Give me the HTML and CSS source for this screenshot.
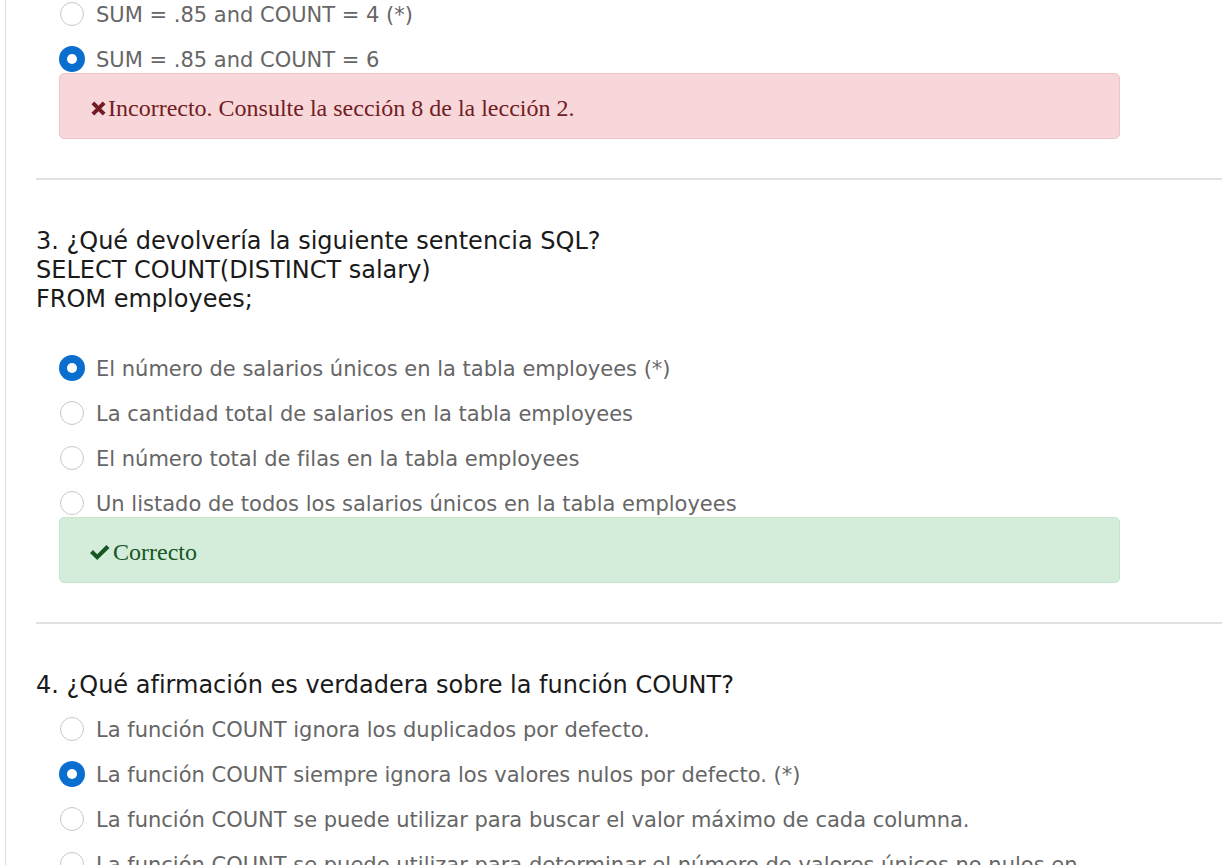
FILE: index.html
```html
<!DOCTYPE html>
<html lang="es">
<head>
<meta charset="utf-8">
<title>Prueba</title>
<link rel="stylesheet" href="styles.css">
</head>
<body>
<div class="page">
  <div class="quiz">
    <section class="question">
      <ul class="options">
        <li class="option"><span class="radio"></span><span class="option-text">SUM = .85 and COUNT = 4 (*)</span></li>
        <li class="option"><span class="radio checked"></span><span class="option-text">SUM = .85 and COUNT = 6</span></li>
      </ul>
      <div class="alert alert-danger">
        <svg class="icon icon-x" viewBox="0 0 16 16" width="16" height="16" aria-hidden="true"><path d="M2 2 L14 14 M14 2 L2 14" stroke="currentColor" stroke-width="4.2" fill="none"/></svg>Incorrecto. Consulte la sección 8 de la lección 2.
      </div>
    </section>

    <hr class="divider">

    <section class="question">
      <p class="prompt prompt-code">3. ¿Qué devolvería la siguiente sentencia SQL?<br>SELECT COUNT(DISTINCT salary)<br>FROM employees;</p>
      <ul class="options">
        <li class="option"><span class="radio checked"></span><span class="option-text">El número de salarios únicos en la tabla employees (*)</span></li>
        <li class="option"><span class="radio"></span><span class="option-text">La cantidad total de salarios en la tabla employees</span></li>
        <li class="option"><span class="radio"></span><span class="option-text">El número total de filas en la tabla employees</span></li>
        <li class="option"><span class="radio"></span><span class="option-text">Un listado de todos los salarios únicos en la tabla employees</span></li>
      </ul>
      <div class="alert alert-success">
        <svg class="icon icon-check" viewBox="0 0 20 15" width="20" height="15" aria-hidden="true"><path d="M0 8 L3 5 L7.2 9.2 L16.4 0 L19.5 3.1 L7.2 15 Z" fill="currentColor"/></svg>Correcto
      </div>
    </section>

    <hr class="divider">

    <section class="question">
      <p class="prompt">4. ¿Qué afirmación es verdadera sobre la función COUNT?</p>
      <ul class="options">
        <li class="option"><span class="radio"></span><span class="option-text">La función COUNT ignora los duplicados por defecto.</span></li>
        <li class="option"><span class="radio checked"></span><span class="option-text">La función COUNT siempre ignora los valores nulos por defecto. (*)</span></li>
        <li class="option"><span class="radio"></span><span class="option-text">La función COUNT se puede utilizar para buscar el valor máximo de cada columna.</span></li>
        <li class="option"><span class="radio"></span><span class="option-text">La función COUNT se puede utilizar para determinar el número de valores únicos no nulos en una columna.</span></li>
      </ul>
    </section>
  </div>
</div>
</body>
</html>
```

FILE: styles.css
```css
html, body {
  margin: 0;
  padding: 0;
  background: #ffffff;
}

body {
  font-family: "DejaVu Sans", Verdana, sans-serif;
  overflow: hidden;
}

.page {
  margin-left: 5px;
  border-left: 1px solid #dcdcdc;
  padding-left: 30px;
  min-height: 100vh;
}

.question {
  max-width: 1083px;
}

.prompt {
  margin: 46px 0 15px;
  padding-top: 1px;
  font-size: 24px;
  line-height: 29px;
  color: #1a1a1a;
}

.prompt-code {
  margin-bottom: 40px;
}

.options {
  list-style: none;
  margin: 0;
  padding: 0 0 0 23px;
}

.option {
  display: flex;
  align-items: flex-start;
  min-height: 28px;
  margin-bottom: 17px;
}

.option:last-child {
  margin-bottom: 0;
}

.radio {
  flex: none;
  box-sizing: border-box;
  width: 24px;
  height: 24px;
  margin: 2px 12px 0 1px;
  border: 1px solid #c9c9c9;
  border-radius: 50%;
  background: #ffffff;
  display: flex;
  align-items: center;
  justify-content: center;
}

.radio.checked {
  width: 26px;
  height: 26px;
  margin: 1px 11px 0 0;
  border: none;
  background: #0a6ecf;
}

.radio.checked::after {
  content: "";
  width: 10px;
  height: 10px;
  border-radius: 50%;
  background: #ffffff;
}

.option-text {
  padding-top: 2px;
  font-size: 21px;
  line-height: 26px;
  color: #666666;
}

.alert {
  box-sizing: border-box;
  display: flex;
  align-items: center;
  width: 1061px;
  height: 66px;
  margin-left: 23px;
  padding: 4px 30px 0;
  border: 1px solid transparent;
  border-radius: 5px;
  font-family: "Liberation Serif", "Times New Roman", serif;
  font-size: 24px;
}

.alert-danger {
  background: #f8d7da;
  border-color: #f2c4c9;
  color: #721c24;
}

.alert-success {
  background: #d4edda;
  border-color: #c3e6cb;
  color: #155724;
}

.icon {
  flex: none;
  margin-right: 2px;
}

.icon-x {
  width: 15px;
  height: 15px;
  margin-left: 1px;
}

.icon-check {
  width: 20px;
  height: 15px;
  margin-right: 3px;
}

.divider {
  margin: 39px 0 0;
  height: 2px;
  border: 0;
  background: #dfe1e4;
}
```
